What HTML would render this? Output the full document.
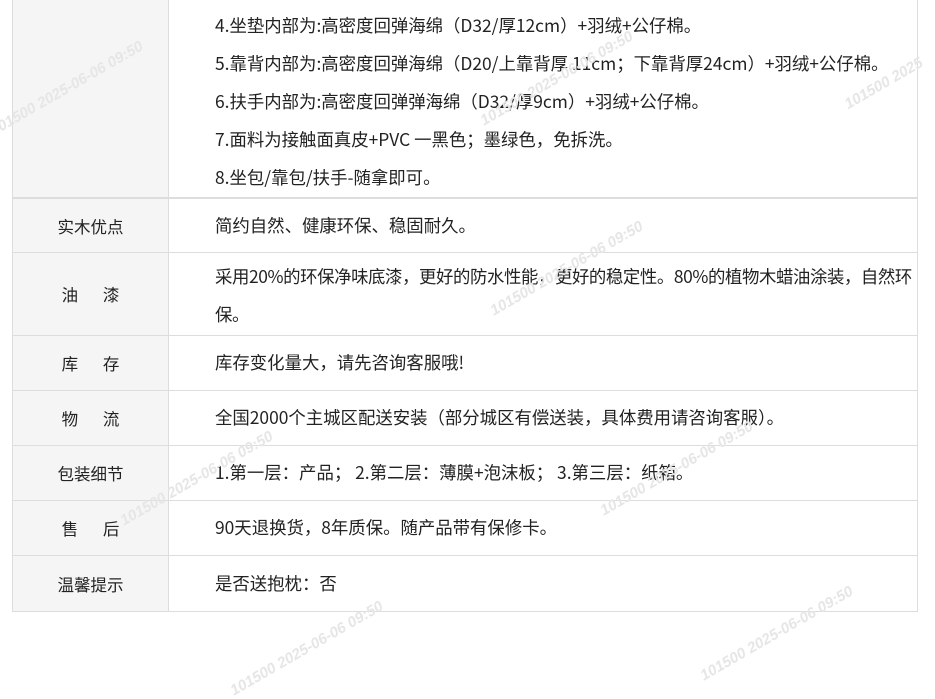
<!DOCTYPE html>
<html><head><meta charset="utf-8"><style>
body{margin:0;width:935px;height:690px;overflow:hidden;background:#fff;font-family:"Noto Sans CJK SC","Liberation Sans",sans-serif;font-size:17.4px;color:#222;position:relative}
.r{position:absolute;left:12px;width:906px;border:1px solid #ddd;border-top:none;box-sizing:border-box;display:flex}
.l{width:155px;background:#f5f5f5;border-right:1px solid #ddd;display:flex;align-items:center;justify-content:center;flex:none;color:#222;font-size:16.5px}
.c{padding-left:46px;line-height:38px;display:flex;flex-direction:column;justify-content:center;padding-right:0;flex:1;min-width:0;white-space:nowrap}
.wm{position:absolute;color:#e6e6e6;font-size:15px;font-style:italic;transform:rotate(-30deg);white-space:nowrap;font-weight:bold;font-family:"Liberation Sans",sans-serif}
</style></head><body>
<div class="r" style="top:-2px;height:200px"><div class="l"></div><div class="c" style="justify-content:flex-start;padding-top:9px">
<div>4.坐垫内部为:高密度回弹海绵（D32/厚12cm）+羽绒+公仔棉。</div>
<div>5.靠背内部为:高密度回弹海绵（D20/上靠背厚 11cm；下靠背厚24cm）+羽绒+公仔棉。</div>
<div>6.扶手内部为:高密度回弹弹海绵（D32/厚9cm）+羽绒+公仔棉。</div>
<div>7.面料为接触面真皮+PVC 一黑色；墨绿色，免拆洗。</div>
<div>8.坐包/靠包/扶手-随拿即可。</div></div></div>
<div class="r" style="top:198px;height:55px;border-top:1px solid #ddd"><div class="l">实木优点</div><div class="c">简约自然、健康环保、稳固耐久。</div></div>
<div class="r" style="top:253px;height:83px"><div class="l">油&emsp;&ensp;漆</div><div class="c" style="padding-top:4px;letter-spacing:-0.4px"><div>采用20%的环保净味底漆，更好的防水性能，更好的稳定性。80%的植物木蜡油涂装，自然环</div><div>保。</div></div></div>
<div class="r" style="top:336px;height:55px"><div class="l">库&emsp;&ensp;存</div><div class="c">库存变化量大，请先咨询客服哦!</div></div>
<div class="r" style="top:391px;height:55px"><div class="l">物&emsp;&ensp;流</div><div class="c">全国2000个主城区配送安装（部分城区有偿送装，具体费用请咨询客服）。</div></div>
<div class="r" style="top:446px;height:55px"><div class="l">包装细节</div><div class="c">1.第一层：产品； 2.第二层：薄膜+泡沫板； 3.第三层：纸箱。</div></div>
<div class="r" style="top:501px;height:55px"><div class="l">售&emsp;&ensp;后</div><div class="c">90天退换货，8年质保。随产品带有保修卡。</div></div>
<div class="r" style="top:556px;height:56px"><div class="l">温馨提示</div><div class="c">是否送抱枕：否</div></div>
<div class="wm" style="left:-20px;top:80px">101500 2025-06-06 09:50</div>
<div class="wm" style="left:470px;top:70px">101500 2025-06-06 09:50</div>
<div class="wm" style="left:840px;top:75px">101500 2025</div>
<div class="wm" style="left:480px;top:260px">101500 2025-06-06 09:50</div>
<div class="wm" style="left:110px;top:470px">101500 2025-06-06 09:50</div>
<div class="wm" style="left:590px;top:460px">101500 2025-06-06 09:50</div>
<div class="wm" style="left:220px;top:640px">101500 2025-06-06 09:50</div>
<div class="wm" style="left:690px;top:625px">101500 2025-06-06 09:50</div>
</body></html>
